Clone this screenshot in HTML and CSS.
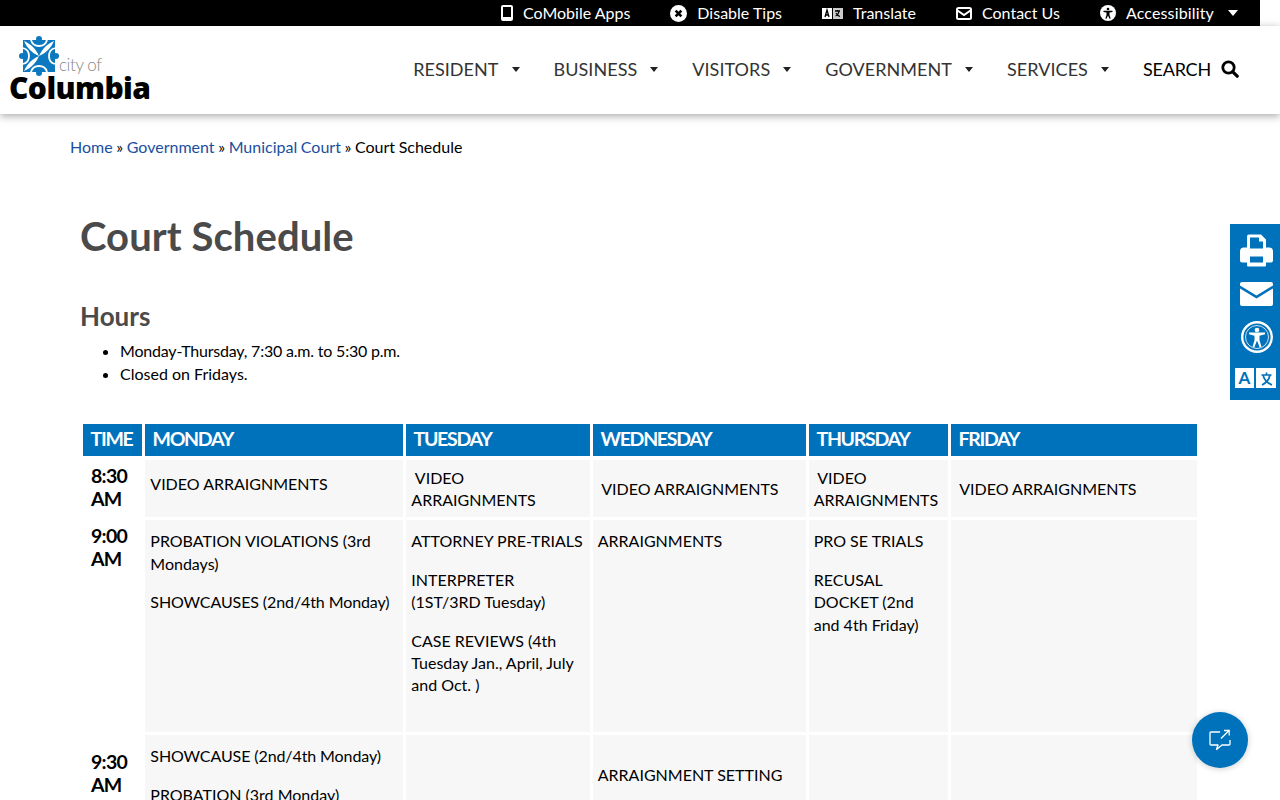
FILE: index.html
```html
<!DOCTYPE html>
<html lang="en">
<head>
<meta charset="utf-8">
<title>Court Schedule</title>
<link rel="stylesheet" href="styles.css">
</head>
<body>
<div class="topbar">
  <a class="tb-item"><svg class="tb-icon" viewBox="0 0 12 16" width="12" height="16"><path fill="#fff" d="M2 0h8a2 2 0 0 1 2 2v12a2 2 0 0 1-2 2H2a2 2 0 0 1-2-2V2a2 2 0 0 1 2-2zm0 2v10h8V2z"/></svg>CoMobile Apps</a>
  <a class="tb-item"><svg class="tb-icon" viewBox="0 0 16 16" width="17" height="17"><circle cx="8" cy="8" r="8" fill="#fff"/><path stroke="#000" stroke-width="2.4" d="M5.3 5.3l5.4 5.4M10.7 5.3l-5.4 5.4"/></svg>Disable Tips</a>
  <a class="tb-item"><svg class="tb-icon" viewBox="0 0 21 11" width="21" height="11"><rect x="0" y="0" width="10" height="11" fill="#fff"/><rect x="11" y="0" width="10" height="11" fill="#ccc"/><path fill="none" stroke="#000" stroke-width="1.3" d="M3 9l2-7 2 7M3.8 7h2.4M13 3h5M15.5 2v1M17 3c-.5 3-2 4.500-3.500 5M14 5c1 2 2.500 3 4 3.500"/></svg>Translate</a>
  <a class="tb-item"><svg class="tb-icon" viewBox="0 0 16 13" width="16" height="13"><rect x="1" y="1" width="14" height="11" rx="1.500" fill="none" stroke="#fff" stroke-width="2"/><path fill="none" stroke="#fff" stroke-width="2" d="M1.500 3.500L8 8l6.500-4.500"/></svg>Contact Us</a>
  <a class="tb-item tb-last"><svg class="tb-icon" viewBox="0 0 16 16" width="16" height="16"><circle cx="8" cy="8" r="8" fill="#fff"/><circle cx="8" cy="4" r="1.300"/><path d="M3.500 5.800h9v1.200l-3 .6v2.400l1.200 3.400-1.200.4L8 10.500l-1.500 3.300-1.200-.4 1.200-3.400V7.600l-3-.6z"/></svg>Accessibility<span class="tb-caret"></span></a>
</div>
<header class="header">
  <a class="logo">
    <svg class="logo-mark" viewBox="0 0 40 40" width="40" height="40">
      <rect x="4" y="4" width="32" height="32" fill="#0b78c0"/>
      <g fill="#0b78c0">
        <circle cx="20" cy="3" r="3"/><circle cx="20" cy="37" r="3"/><circle cx="3" cy="20" r="3"/><circle cx="37" cy="20" r="3"/>
      </g>
      <g fill="#fff">
        <path d="M20 20C17 13 12 8 5 5c3 7 8 12 15 15z"/>
        <path d="M35 5c-7 3-12 8-15 15 7-3 12-8 15-15z"/>
        <path d="M20 20c-7 3-12 8-15 15 7-3 12-8 15-15z"/>
        <path d="M20 20c7 3 12 8 15 15-3-7-8-12-15-15z"/>
      </g>
      <g fill="none" stroke="#fff" stroke-width="1.800">
        <path d="M12 4c1 4 4 6 8 6s7-2 8-6"/>
        <path d="M12 36c1-4 4-6 8-6s7 2 8 6"/>
        <path d="M4 12c4 1 6 4 6 8s-2 7-6 8"/>
        <path d="M36 12c-4 1-6 4-6 8s2 7 6 8"/>
      </g>
    </svg>
    <span class="logo-city">city of</span>
    <span class="logo-name">Columbia</span>
  </a>
  <nav class="nav">
    <a class="nav-item">RESIDENT<span class="caret"></span></a>
    <a class="nav-item">BUSINESS<span class="caret"></span></a>
    <a class="nav-item">VISITORS<span class="caret"></span></a>
    <a class="nav-item">GOVERNMENT<span class="caret"></span></a>
    <a class="nav-item">SERVICES<span class="caret"></span></a>
    <a class="nav-item nav-search">SEARCH<svg class="search-icon" viewBox="0 0 18 18" width="18" height="18"><circle cx="7.500" cy="7.500" r="5.700" fill="none" stroke="#000" stroke-width="2.800"/><path stroke="#000" stroke-width="3.200" stroke-linecap="round" d="M11.800 11.800l4.400 4.400"/></svg></a>
  </nav>
</header>
<aside class="sidebar">
  <svg viewBox="0 0 33 32" width="33" height="33"><path fill="#fff" d="M7 2a2 2 0 0 1 2-2h12l5 5v8h3a4 4 0 0 1 4 4v9a2 2 0 0 1-2 2h-5v3a1 1 0 0 1-1 1H8a1 1 0 0 1-1-1v-3H2a2 2 0 0 1-2-2v-9a4 4 0 0 1 4-4h3zm3 1v11h13V7h-4V3zm0 19v6h13v-6z"/></svg>
  <svg viewBox="0 0 33 24" width="33" height="24"><path fill="#fff" d="M2 0h29a2 2 0 0 1 2 2v1.500L16.500 13.500 0 3.500V2a2 2 0 0 1 2-2zM0 6.500l16.500 10 16.500-10V22a2 2 0 0 1-2 2H2a2 2 0 0 1-2-2z"/></svg>
  <svg viewBox="0 0 32 32" width="32" height="32"><circle cx="16" cy="16" r="14.800" fill="none" stroke="#fff" stroke-width="2.400"/><circle cx="16" cy="16" r="11.500" fill="none" stroke="#fff" stroke-width=".8"/><circle cx="16" cy="9" r="2.300" fill="#fff"/><path fill="#fff" d="M8 11.500h16v1.800l-5.500 1.500v4.500l2 6.500-1.800.7-2.500-6.500h-.4l-2.500 6.500-1.800-.7 2-6.500v-4.500L8 13.300z"/></svg>
  <svg viewBox="0 0 41 20" width="41" height="20" class="side-translate"><rect width="19" height="20" fill="#fff"/><rect x="21" width="20" height="20" fill="#fff"/><text x="9.500" y="16" class="side-a">A</text><path fill="none" stroke="#0072bc" stroke-width="1.700" d="M26.500 7h10M31.500 4.500v2.500M35 7c-1 5-4 8-8 10M28 7c1 4 4 8 9 10"/></svg>
</aside>
<main class="main">
  <p class="crumbs"><a>Home</a> » <a>Government</a> » <a>Municipal Court</a> » Court Schedule</p>
  <div class="content">
    <h1 class="title">Court Schedule</h1>
    <h2 class="subtitle">Hours</h2>
    <ul class="hours">
      <li class="tight">Monday-Thursday, 7:30 a.m. to 5:30 p.m.</li>
      <li>Closed on Fridays.</li>
    </ul>
    <table class="schedule">
      <colgroup><col class="c-time"><col class="c-mon"><col class="c-tue"><col class="c-wed"><col class="c-thu"><col class="c-fri"></colgroup>
      <thead><tr><th>TIME</th><th>MONDAY</th><th>TUESDAY</th><th>WEDNESDAY</th><th>THURSDAY</th><th>FRIDAY</th></tr></thead>
      <tbody>
        <tr class="r1">
          <td class="time">8:30 AM</td>
          <td><p class="gap">VIDEO ARRAIGNMENTS</p></td>
          <td>&nbsp;VIDEO ARRAIGNMENTS</td>
          <td>&nbsp;VIDEO ARRAIGNMENTS</td>
          <td>&nbsp;VIDEO ARRAIGNMENTS</td>
          <td>&nbsp;VIDEO ARRAIGNMENTS</td>
        </tr>
        <tr class="r2">
          <td class="time top">9:00 AM</td>
          <td class="top"><p>PROBATION VIOLATIONS (3rd Mondays)</p><p class="snug">SHOWCAUSES (2nd/4th Monday)</p></td>
          <td class="top"><p>ATTORNEY PRE-TRIALS</p><p>INTERPRETER (1ST/3RD Tuesday)</p><p>CASE REVIEWS (4th Tuesday Jan., April, July and Oct. )</p></td>
          <td class="top"><p>ARRAIGNMENTS</p></td>
          <td class="top"><p>PRO SE TRIALS</p><p>RECUSAL DOCKET (2nd and 4th Friday)</p></td>
          <td></td>
        </tr>
        <tr class="r3">
          <td class="time top">9:30 AM</td>
          <td class="top"><p class="snug">SHOWCAUSE (2nd/4th Monday)</p><p>PROBATION (3rd Monday)</p></td>
          <td></td>
          <td>ARRAIGNMENT SETTING</td>
          <td></td>
          <td></td>
        </tr>
      </tbody>
    </table>
  </div>
</main>
<a class="chat"><svg viewBox="0 0 24 24" width="24" height="24"><path fill="none" stroke="#fff" stroke-width="1.300" stroke-linejoin="round" d="M12 4H3a1 1 0 0 0-1 1v11a1 1 0 0 0 1 1h7l-1.500 4.500L14 17h7a1 1 0 0 0 1-1v-4"/><path fill="none" stroke="#fff" stroke-width="1.300" d="M13 10.500L21 2.500M16 2.500h5.200v5"/></svg></a>
</body>
</html>
```
FILE: styles.css
```css
* { box-sizing: border-box; }
html, body { margin: 0; padding: 0; }
body { height: 800px; overflow: hidden; font-family: Lato, "Liberation Sans", sans-serif; font-size: 16px; line-height: 22.4px; color: #000; background: #fff; position: relative; }
.topbar { width: 1260px; height: 26px; background: #000; display: flex; justify-content: flex-end; align-items: center; color: #fff; padding-right: 22px; }
.tb-item { display: flex; align-items: center; margin-left: 40px; color: #fff; }
.tb-last { letter-spacing: .15px; }
.tb-icon { margin-right: 10px; }
.tb-caret { width: 0; height: 0; margin-left: 14px; border: 5.500px solid transparent; border-top: 6px solid #fff; border-bottom: 0; }
.header { height: 88px; display: flex; justify-content: space-between; align-items: center; box-shadow: 0 2px 8px rgba(0,0,0,.35); padding: 0 41px 2px 10px; background: #fff; position: relative; }
.logo { display: block; position: relative; width: 141px; height: 66px; }
.logo-mark { position: absolute; left: 9px; top: 0; }
.logo-city { position: absolute; left: 49px; top: 21px; font-size: 17px; line-height: 16px; font-weight: 300; color: #888; letter-spacing: -.4px; }
.logo-name { position: absolute; left: -1px; top: 37px; font-family: "Open Sans", sans-serif; font-size: 30px; line-height: 30px; font-weight: 800; letter-spacing: -.6px; color: #000; }
.nav { display: flex; align-items: center; font-size: 18px; color: #333; letter-spacing: .05px; }
.nav-item { display: flex; align-items: center; margin-left: 34px; }
.caret { width: 0; height: 0; margin-left: 13px; border: 4.500px solid transparent; border-top: 5px solid #222; border-bottom: 0; }
.nav .nav-search { color: #000; letter-spacing: -.2px; }
.search-icon { margin-left: 10px; }
.main { padding: 22px 80px 0 70px; }
.crumbs { margin: 0; word-spacing: -.5px; }
.crumbs a { color: #1a4fa0; }
.content { padding-left: 10px; }
.title { margin: 52px 0 0; font-size: 40px; line-height: 52px; font-weight: 700; color: #4a4a4a; letter-spacing: .07px; }
.subtitle { margin: 37px 0 0; font-size: 26px; line-height: 34px; font-weight: 700; color: #4a4a4a; }
.hours { margin: 6px 0 0; padding-left: 40px; line-height: 23px; }
.hours .tight { letter-spacing: -.2px; }
.schedule { margin-top: 36px; width: 1120px; table-layout: fixed; border-collapse: separate; border-spacing: 3px; }
.c-time { width: 59px; } .c-mon { width: 258px; } .c-tue { width: 184px; } .c-wed { width: 213px; } .c-thu { width: 139px; } .c-fri { width: 246px; }
.schedule th { height: 33px; padding: 0 7.500px 3px; background: #0072bc; background-clip: padding-box; border-bottom: 1px solid transparent; color: #fff; font-size: 19.500px; font-weight: 700; text-align: left; letter-spacing: -1.300px; }
.schedule td { background: #f7f7f7; padding: 6px 5px 6px 5.300px; vertical-align: middle; }
.schedule td:nth-child(n+4) { padding-left: 4.700px; }
.schedule td.time { background: #fff; font-size: 19.500px; font-weight: 700; line-height: 23px; padding: 3px 8px 7px; letter-spacing: -.7px; }
.schedule td.top { vertical-align: top; padding-top: 10px; }
.schedule td.time.top { padding-top: 4px; }
.r3 td.time.top { padding-top: 15px; }
.schedule p { margin: 0 0 16px; }
.schedule p.gap { margin-bottom: 10px; }
.schedule p.snug { letter-spacing: -.1px; }
.r3 td.top p:last-child { margin-bottom: 0; }
.r1 td { height: 57px; }
.r2 td { height: 212px; }
.r3 td { height: 80px; }
.sidebar { position: absolute; right: 0; top: 224px; width: 50px; height: 176px; background: #0072bc; display: flex; flex-direction: column; align-items: center; padding: 10px 0 0 3px; gap: 15px; }
.side-translate { margin-left: -2px; }
.side-a { font: 700 17px Lato, sans-serif; fill: #0072bc; text-anchor: middle; }
.chat { position: absolute; left: 1192px; top: 712px; width: 56px; height: 56px; border-radius: 50%; background: #0072bc; box-shadow: 0 1px 6px rgba(0,0,0,.2); display: flex; align-items: center; justify-content: center; }
```
